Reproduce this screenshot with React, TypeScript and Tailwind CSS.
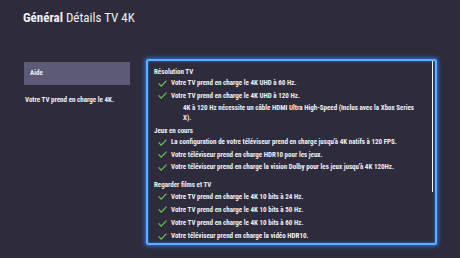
import React from "react";

const font = {
  fontFamily: '"Liberation Sans Narrow", "Roboto Condensed", "Liberation Sans", sans-serif',
};

type Item = { text: string; note?: string };

const sections: { title: string; items: Item[] }[] = [
  {
    title: "Résolution TV",
    items: [
      { text: "Votre TV prend en charge le 4K UHD à 60 Hz." },
      {
        text: "Votre TV prend en charge le 4K UHD à 120 Hz.",
        note: "4K à 120 Hz nécessite un câble HDMI Ultra High-Speed (Inclus avec la Xbox Series X).",
      },
    ],
  },
  {
    title: "Jeux en cours",
    items: [
      { text: "La configuration de votre téléviseur prend en charge jusqu'à 4K natifs à 120 FPS." },
      { text: "Votre téléviseur prend en charge HDR10 pour les jeux." },
      { text: "Votre téléviseur prend en charge la vision Dolby pour les jeux jusqu'à 4K 120Hz." },
    ],
  },
  {
    title: "Regarder films et TV",
    items: [
      { text: "Votre TV prend en charge le 4K 10 bits à 24 Hz." },
      { text: "Votre TV prend en charge le 4K 10 bits à 50 Hz." },
      { text: "Votre TV prend en charge le 4K 10 bits à 60 Hz." },
      { text: "Votre téléviseur prend en charge la vidéo HDR10." },
    ],
  },
];

function Check() {
  return (
    <svg width="9" height="7" viewBox="0 0 9 7" className="shrink-0">
      <path d="M0.6 3.4 L3.2 6.1 L8.5 0.7" fill="none" stroke="#6cc852" strokeWidth="1.15" />
    </svg>
  );
}

export default function App() {
  return (
    <div
      className="w-[460px] h-[258px] overflow-hidden bg-[#2e2b3c] text-[#f1f0f6]"
      style={font}
    >
      <header className="pl-[23px] pt-[10px] h-[59px] text-[13px] leading-[16px]">
        <span className="font-bold">Général</span> <span>Détails TV 4K</span>
      </header>

      <div className="flex">
        <aside className="ml-[24px] w-[106px] pt-[3px]">
          <div className="h-[23px] bg-[#5d5a77] pl-[6px] flex items-center text-[7px] font-bold">
            Aide
          </div>
          <p className="mt-[11px] ml-[1px] text-[7px] font-bold leading-[9px]">
            Votre TV prend en charge le 4K.
          </p>
        </aside>

        <section className="relative ml-[16px] w-[291px] h-[186px] border-2 border-[#5cb0ff] rounded-[2px] shadow-[0_0_4px_1px_#2f74e6,inset_0_0_3px_#2f74e6] pl-[6px] pt-[7px] text-[7px] font-bold">
          <div className="absolute right-[2px] top-0 w-[1.5px] h-[131px] bg-[#f4f4ff]" />
          {sections.map((s, i) => (
            <div key={s.title} className={i === 1 ? "mt-[3px]" : i === 2 ? "mt-[7.5px]" : ""}>
              <h2 className="h-[9px] leading-[9px]">{s.title}</h2>
              {s.items.map((it) => (
                <div key={it.text}>
                  <div className={`${i === 2 ? "h-[13.2px]" : "h-[12.6px]"} flex items-center`}>
                    <span className="ml-[4px] mr-[4px]">
                      <Check />
                    </span>
                    <span>{it.text}</span>
                  </div>
                  {it.note && (
                    <p className="mt-[2.3px] ml-[29px] w-[240px] leading-[9.7px]">{it.note}</p>
                  )}
                </div>
              ))}
            </div>
          ))}
        </section>
      </div>
    </div>
  );
}
